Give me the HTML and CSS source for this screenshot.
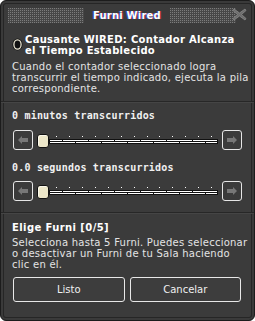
FILE: index.html
```html
<!DOCTYPE html>
<html>
<head>
<meta charset="utf-8">
<link rel="stylesheet" href="styles.css">
</head>
<body>
<div class="window">
  <div class="header">
    <span class="stripes left"></span>
    <span class="title">Furni Wired</span>
    <span class="stripes right"></span>
    <svg class="close" width="15" height="13" viewBox="0 0 15 13">
      <path d="M2 1 L7.5 5 L13 1 L14 2.5 L9.5 6.5 L14 10.5 L13 12 L7.5 8 L2 12 L1 10.5 L5.5 6.5 L1 2.5 Z" fill="#6e6e6e" stroke="#8a8a8a" stroke-width="0.8"/>
    </svg>
  </div>

  <div class="section intro">
    <div class="trigger">
      <svg class="radio" width="11" height="13" viewBox="0 0 11 13">
        <ellipse cx="5.5" cy="6.5" rx="5" ry="6" fill="#111"/>
        <ellipse cx="5.5" cy="6.5" rx="3.6" ry="4.6" fill="none" stroke="#e8e4d0" stroke-width="1.3"/>
        <ellipse cx="5.5" cy="6.5" rx="1.6" ry="2.4" fill="#111"/>
      </svg>
      <div class="trigger-title">Causante WIRED: Contador Alcanza<br>el Tiempo Establecido</div>
    </div>
    <p class="desc">Cuando el contador seleccionado logra<br>transcurrir el tiempo indicado, ejecuta la pila<br>correspondiente.</p>
  </div>

  <div class="section sliders">
    <div class="label">0 minutos transcurridos</div>
    <div class="slider first">
      <div class="arrow-btn">
        <svg width="10" height="8" viewBox="0 0 10 8"><path d="M0 4 L4 0 L4 2 L10 2 L10 6 L4 6 L4 8 Z" fill="#777"/></svg>
      </div>
      <div class="thumb"></div>
      <svg class="track" width="169" height="20" viewBox="0 0 169 20">
        <g fill="#fff">
          <rect x="7" y="6" width="1" height="1"/><rect x="20" y="6" width="1" height="1"/><rect x="33" y="6" width="1" height="1"/><rect x="46" y="6" width="1" height="1"/><rect x="59" y="6" width="1" height="1"/><rect x="72" y="6" width="1" height="1"/><rect x="85" y="6" width="1" height="1"/><rect x="98" y="6" width="1" height="1"/><rect x="110" y="6" width="1" height="1"/><rect x="123" y="6" width="1" height="1"/><rect x="136" y="6" width="1" height="1"/><rect x="149" y="6" width="1" height="1"/><rect x="162" y="6" width="1" height="1"/>
        </g>
        <rect x="0" y="9" width="169" height="5" fill="#111"/>
        <rect x="1" y="10" width="167" height="1" fill="#fff"/>
        <rect x="1" y="12" width="167" height="1" fill="#fff"/>
        <g fill="#111">
          <rect x="13" y="10" width="1" height="1"/><rect x="39" y="10" width="1" height="1"/><rect x="65" y="10" width="1" height="1"/><rect x="91" y="10" width="1" height="1"/><rect x="117" y="10" width="1" height="1"/><rect x="143" y="10" width="1" height="1"/>
          <rect x="26" y="12" width="1" height="1"/><rect x="52" y="12" width="1" height="1"/><rect x="78" y="12" width="1" height="1"/><rect x="104" y="12" width="1" height="1"/><rect x="130" y="12" width="1" height="1"/><rect x="156" y="12" width="1" height="1"/>
        </g>
      </svg>
      <div class="arrow-btn">
        <svg width="10" height="8" viewBox="0 0 10 8"><path d="M10 4 L6 0 L6 2 L0 2 L0 6 L6 6 L6 8 Z" fill="#777"/></svg>
      </div>
    </div>

    <div class="label second">0.0 segundos transcurridos</div>
    <div class="slider">
      <div class="arrow-btn">
        <svg width="10" height="8" viewBox="0 0 10 8"><path d="M0 4 L4 0 L4 2 L10 2 L10 6 L4 6 L4 8 Z" fill="#777"/></svg>
      </div>
      <div class="thumb"></div>
      <svg class="track" width="169" height="20" viewBox="0 0 169 20">
        <g fill="#fff">
          <rect x="7" y="6" width="1" height="1"/><rect x="20" y="6" width="1" height="1"/><rect x="33" y="6" width="1" height="1"/><rect x="46" y="6" width="1" height="1"/><rect x="59" y="6" width="1" height="1"/><rect x="72" y="6" width="1" height="1"/><rect x="85" y="6" width="1" height="1"/><rect x="98" y="6" width="1" height="1"/><rect x="110" y="6" width="1" height="1"/><rect x="123" y="6" width="1" height="1"/><rect x="136" y="6" width="1" height="1"/><rect x="149" y="6" width="1" height="1"/><rect x="162" y="6" width="1" height="1"/>
        </g>
        <rect x="0" y="9" width="169" height="5" fill="#111"/>
        <rect x="1" y="10" width="167" height="1" fill="#fff"/>
        <rect x="1" y="12" width="167" height="1" fill="#fff"/>
        <g fill="#111">
          <rect x="13" y="10" width="1" height="1"/><rect x="39" y="10" width="1" height="1"/><rect x="65" y="10" width="1" height="1"/><rect x="91" y="10" width="1" height="1"/><rect x="117" y="10" width="1" height="1"/><rect x="143" y="10" width="1" height="1"/>
          <rect x="26" y="12" width="1" height="1"/><rect x="52" y="12" width="1" height="1"/><rect x="78" y="12" width="1" height="1"/><rect x="104" y="12" width="1" height="1"/><rect x="130" y="12" width="1" height="1"/><rect x="156" y="12" width="1" height="1"/>
        </g>
      </svg>
      <div class="arrow-btn">
        <svg width="10" height="8" viewBox="0 0 10 8"><path d="M10 4 L6 0 L6 2 L0 2 L0 6 L6 6 L6 8 Z" fill="#777"/></svg>
      </div>
    </div>
  </div>

  <div class="section furni">
    <div class="furni-title">Elige Furni [0/5]</div>
    <p class="desc">Selecciona hasta 5 Furni. Puedes seleccionar<br>o desactivar un Furni de tu Sala haciendo<br>clic en él.</p>
    <div class="actions">
      <button class="btn">Listo</button>
      <button class="btn">Cancelar</button>
    </div>
  </div>
</div>
</body>
</html>
```

FILE: styles.css
```css
html, body {
  margin: 0;
  padding: 0;
  background: #fff;
}

.window {
  position: relative;
  box-sizing: border-box;
  width: 255px;
  height: 321px;
  background: #3b3b3b;
  border: 1px solid #1c1c1c;
  border-radius: 6px;
  box-shadow: inset 0 0 0 2px #3a3a3a, inset 0 0 0 3px #262626;
  font-family: "DejaVu Sans", sans-serif;
  font-size: 10px;
  color: #e6e6e6;
  overflow: hidden;
}

.header {
  position: relative;
  display: flex;
  align-items: center;
  height: 26px;
  box-sizing: border-box;
  padding: 3px 18px 0 7px;
}

.stripes {
  display: block;
  height: 15px;
  background-color: #505050;
  background-image:
    repeating-linear-gradient(to right, transparent 0px, transparent 1px, #474747 1px, #474747 2px),
    repeating-linear-gradient(to bottom, #7c7c7c 0px, #7c7c7c 1px, #474747 1px, #474747 2px);
}

.stripes.left {
  width: 76px;
  flex: none;
}

.stripes.right {
  flex: 1 1 auto;
  min-width: 20px;
}

.title {
  flex: none;
  margin: 0 9px 0 9px;
  font-weight: bold;
  font-size: 10px;
  color: #fff;
  text-shadow: -1px 0 0 #3050c0, 1px 0 0 #b03040;
  letter-spacing: 0.2px;
}

.close {
  position: absolute;
  right: 7px;
  top: 7px;
}

.section {
  padding-left: 11px;
  padding-right: 8px;
  border-bottom: 1px solid #272727;
  box-shadow: 0 1px 0 #454545;
  white-space: nowrap;
}

.intro {
  padding-top: 7px;
  padding-bottom: 7px;
}

.trigger {
  display: flex;
  align-items: flex-start;
  gap: 2px;
}

.radio {
  margin-top: 4px;
  flex: none;
}

.trigger-title {
  font-weight: bold;
  color: #fff;
  line-height: 11px;
  letter-spacing: 0.3px;
}

.desc {
  margin: 5px 0 0;
  line-height: 11px;
  color: #e4e4e4;
  letter-spacing: 0.25px;
}

.sliders {
  padding-top: 8px;
  padding-bottom: 11px;
}

.label {
  font-family: "DejaVu Sans Mono", monospace;
  font-weight: bold;
  font-size: 10px;
  line-height: 11px;
  color: #f0f0f0;
  letter-spacing: 0.2px;
}

.label.second {
  margin-top: 12px;
}

.slider {
  display: flex;
  align-items: flex-start;
  margin-top: 8px;
  padding-left: 1px;
  height: 20px;
}

.slider.first {
  margin-top: 9px;
}

.arrow-btn {
  box-sizing: border-box;
  width: 20px;
  height: 20px;
  border: 1px solid #e6e6e6;
  border-radius: 3px;
  display: flex;
  align-items: center;
  justify-content: center;
  flex: none;
}

.thumb {
  box-sizing: border-box;
  width: 12px;
  height: 14px;
  margin: 4px 0 0 4px;
  background: #ece6c8;
  border: 1px solid #111;
  border-radius: 3px;
  box-shadow: inset 1px 1px 0 #fbf8ea;
  flex: none;
}

.track {
  display: block;
  flex: none;
  margin-right: 4px;
}

.furni {
  border-bottom: none;
  box-shadow: none;
  padding-top: 9px;
  padding-right: 13px;
}

.furni-title {
  font-weight: bold;
  color: #fff;
  line-height: 11px;
  letter-spacing: 0.4px;
}

.furni .desc {
  margin-top: 4px;
}

.actions {
  display: flex;
  gap: 5px;
  margin-top: 7px;
  padding-left: 1px;
}

.btn {
  flex: 1;
  height: 25px;
  box-sizing: border-box;
  background: #3d3d3d;
  border: 1px solid #e8e8e8;
  border-radius: 3px;
  color: #f0f0f0;
  font-family: "DejaVu Sans", sans-serif;
  font-size: 10px;
  padding: 0;
}
```
